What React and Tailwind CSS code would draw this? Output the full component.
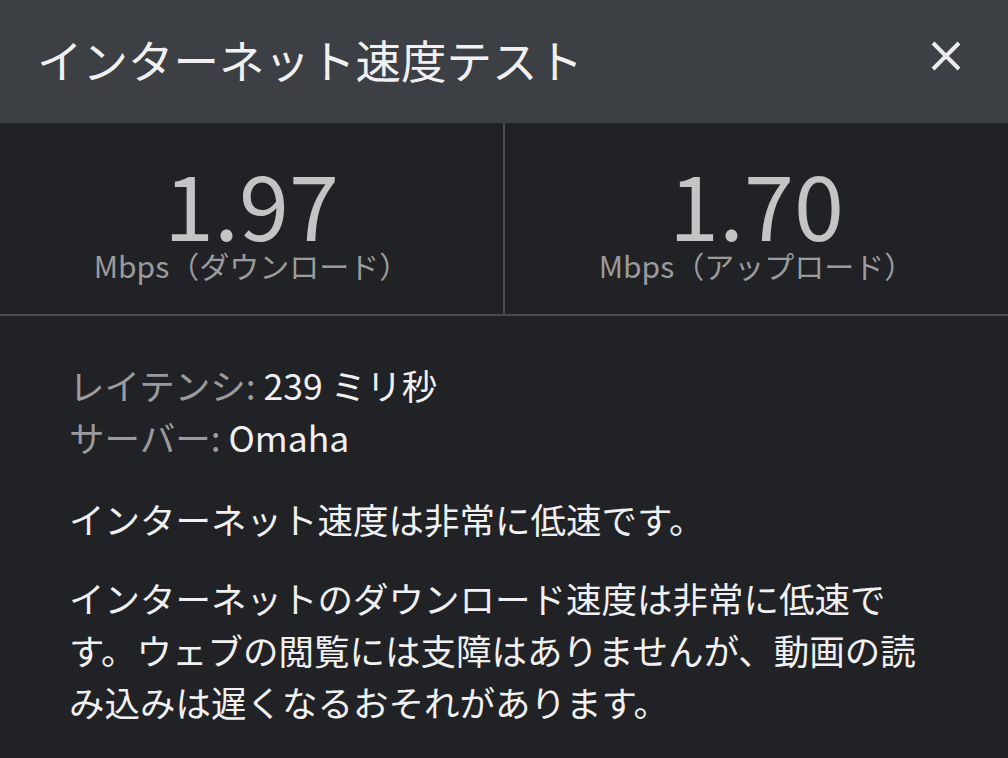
import React from "react";

const font = { fontFamily: '"Noto Sans CJK JP", "Noto Sans", sans-serif' };

function Stat({ value, label }) {
  return (
    <div className="flex flex-1 flex-col items-center justify-center pt-[8px]">
      <div className="text-[90px] leading-[84.5px] text-[#c4c4c4]">{value}</div>
      <div className="text-[30px] leading-[40px] text-[#9b9b9b]">{label}</div>
    </div>
  );
}

export default function App() {
  return (
    <div
      className="w-[1008px] h-[758px] overflow-hidden bg-[#212226] flex flex-col font-['Noto_Sans_CJK_JP',sans-serif]"
      style={font}
    >
      <div className="h-[123px] shrink-0 bg-[#3c3f43] flex items-center justify-between pl-[37px] pr-[46px] pb-[3px]">
        <div className="text-[45.5px] leading-none text-[#f0f0f0]">インターネット速度テスト</div>
        <svg width="32" height="32" viewBox="0 0 32 32" className="mt-[-8px]">
          <path d="M3 3 L29 29 M29 3 L3 29" stroke="#ececec" strokeWidth="4" strokeLinecap="butt" />
        </svg>
      </div>
      <div className="h-[193px] shrink-0 flex border-b-2 border-[#4a4b4f]">
        <Stat value="1.97" label="Mbps（ダウンロード）" />
        <div className="w-[2px] bg-[#4a4b4f]" />
        <Stat value="1.70" label="Mbps（アップロード）" />
      </div>
      <div className="flex flex-col pl-[69px] pr-[79px] pt-[43px] text-[35.5px] leading-[52px] text-[#f0f0f0]">
        <div>
          <span className="text-[#9b9b9b]">レイテンシ:</span> 239 ミリ秒
        </div>
        <div>
          <span className="text-[#9b9b9b]">サーバー:</span> Omaha
        </div>
        <p className="mt-[30px]">インターネット速度は非常に低速です。</p>
        <p className="mt-[27px]">
          インターネットのダウンロード速度は非常に低速です。ウェブの閲覧には支障はありませんが、動画の読み込みは遅くなるおそれがあります。
        </p>
      </div>
    </div>
  );
}
